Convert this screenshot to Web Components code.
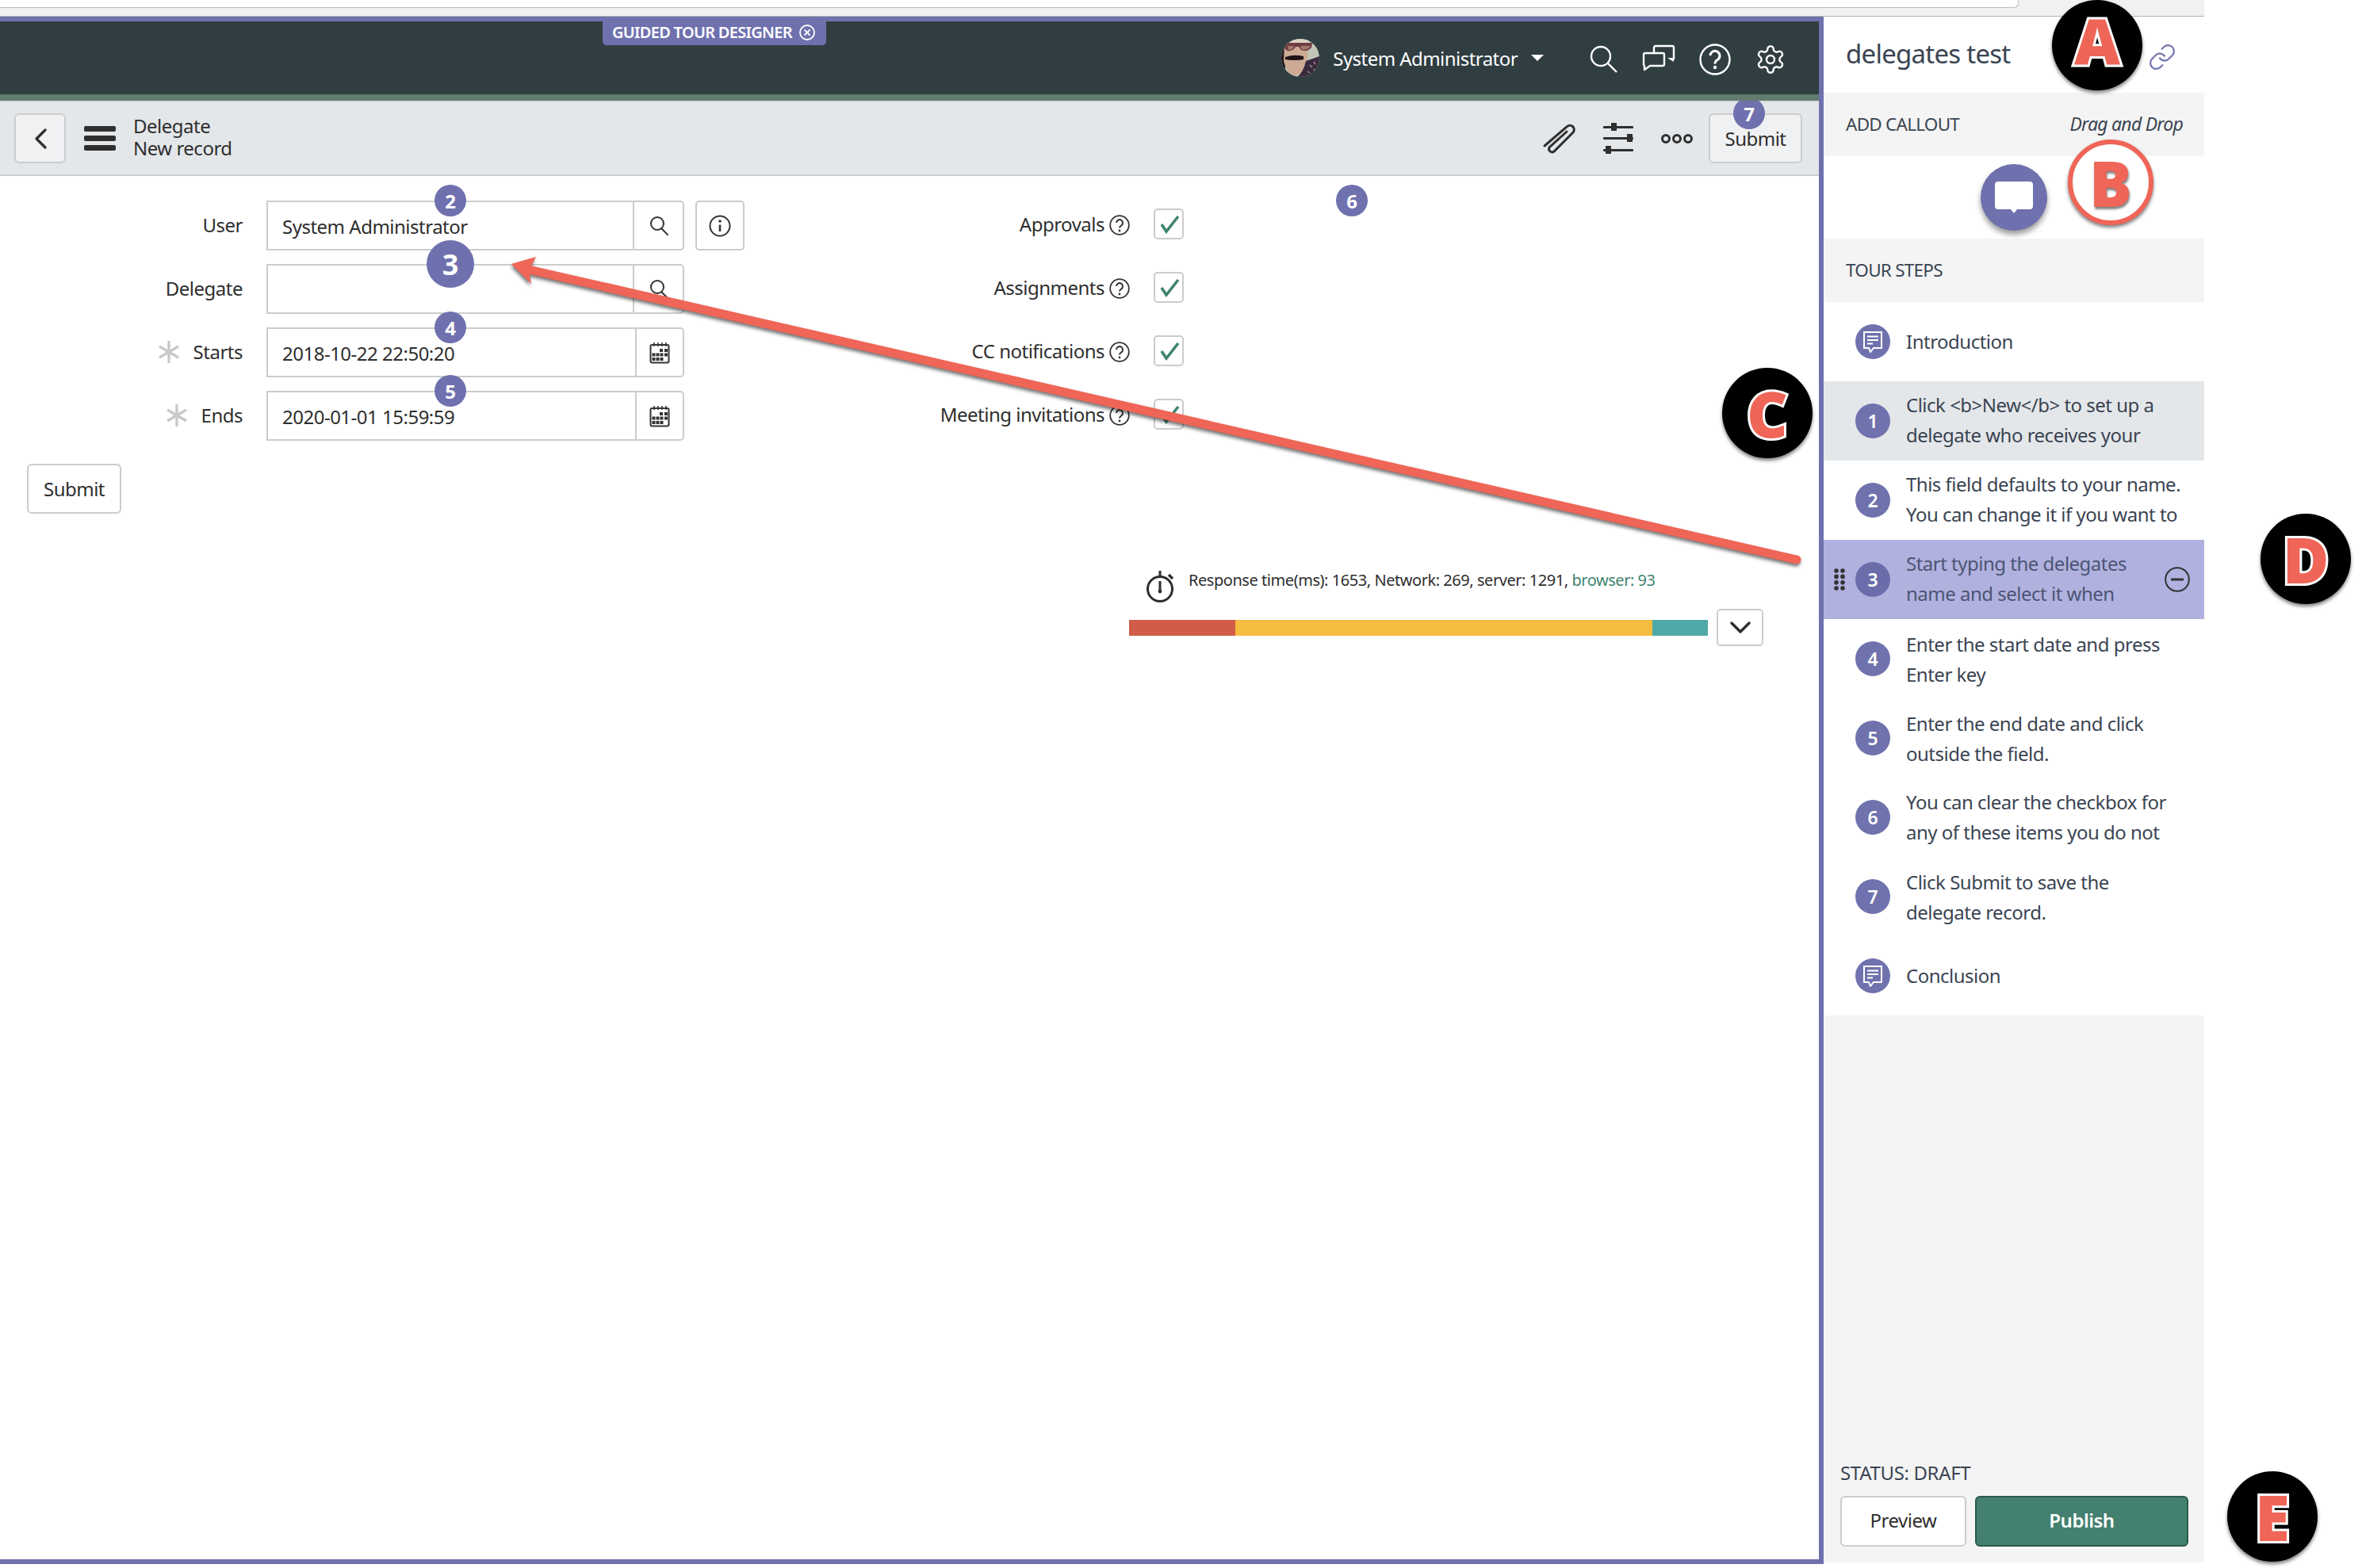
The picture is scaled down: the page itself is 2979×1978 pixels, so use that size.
<!DOCTYPE html>
<html>
<head>
<meta charset="utf-8">
<style>
  html, body { margin: 0; padding: 0; background: #fff; }
  body {
    font-family: "Noto Sans", "Open Sans", sans-serif;
    font-size: 24px;
    letter-spacing: -0.5px;
    color: #2e2e2e;
  }
</style>
</head>
<body>
<tour-page>
  <browser-strip></browser-strip>
  <div style="display:flex;align-items:flex-start">
    <app-frame>
      <top-nav user="System Administrator"></top-nav>
      <form-header title-top="Delegate" title-bottom="New record">
        <step-badge slot="over" num="7" x="2206" y="14"></step-badge>
      </form-header>
      <record-form>
        <div slot="left">
          <form-field label="User" value="System Administrator" icon="search" info></form-field>
          <form-field label="Delegate" icon="search"></form-field>
          <form-field label="Starts" value="2018-10-22 22:50:20" icon="calendar" required></form-field>
          <form-field label="Ends" value="2020-01-01 15:59:59" icon="calendar" required></form-field>
        </div>
        <div slot="right">
          <check-field label="Approvals"></check-field>
          <check-field label="Assignments"></check-field>
          <check-field label="CC notifications"></check-field>
          <check-field label="Meeting invitations"></check-field>
        </div>
      </record-form>
      <perf-bar></perf-bar>
    </app-frame>
    <tour-panel name="delegates test">
      <tour-step kind="note">Introduction</tour-step>
      <tour-step num="1" state="hover" nudge="-2">Click &lt;b&gt;New&lt;/b&gt; to set up a<br>delegate who receives your</tour-step>
      <tour-step num="2" nudge="-2">This field defaults to your name.<br>You can change it if you want to</tour-step>
      <tour-step num="3" state="active" nudge="-2">Start typing the delegates<br>name and select it when</tour-step>
      <tour-step num="4" nudge="2">Enter the start date and press<br>Enter key</tour-step>
      <tour-step num="5" nudge="2">Enter the end date and click<br>outside the field.</tour-step>
      <tour-step num="6" nudge="-1">You can clear the checkbox for<br>any of these items you do not</tour-step>
      <tour-step num="7" nudge="2">Click Submit to save the<br>delegate record.</tour-step>
      <tour-step kind="note">Conclusion</tour-step>
    </tour-panel>
  </div>

  <step-badge num="2" x="568" y="253"></step-badge>
  <step-badge num="3" x="568" y="333" size="60"></step-badge>
  <step-badge num="4" x="568" y="413"></step-badge>
  <step-badge num="5" x="568" y="493"></step-badge>
  <step-badge num="6" x="1705" y="253"></step-badge>

  <callout-arrow></callout-arrow>

  <letter-callout letter="A" x="2645" y="57" ly="-6"></letter-callout>
  <letter-callout letter="B" x="2662" y="230" variant="ring"></letter-callout>
  <letter-callout letter="C" x="2229" y="521"></letter-callout>
  <letter-callout letter="D" x="2908" y="705"></letter-callout>
  <letter-callout letter="E" x="2866" y="1913"></letter-callout>
</tour-page>

<script>
const ICONS = {
  search: '<svg width="26" height="26" viewBox="0 0 26 26" fill="none" stroke="#333" stroke-width="2"><circle cx="11" cy="10" r="8"/><path d="M16.5 16.5 L24 24" stroke-linecap="round"/></svg>',
  calendar: '<svg width="26" height="28" viewBox="0 0 26 28" fill="none" stroke="#333" stroke-width="2"><rect x="1.5" y="4" width="23" height="22.5" rx="2"/><path d="M6 1v5M11 1v5M16 1v5M21 1v5" stroke-width="1.5"/><g fill="#333" stroke="none"><rect x="13" y="9" width="4" height="4"/><rect x="19" y="9" width="4" height="4"/><rect x="3.5" y="14.5" width="4" height="4"/><rect x="8.5" y="14.5" width="4" height="4"/><rect x="13.5" y="14.5" width="4" height="4"/><rect x="19" y="14.5" width="4" height="4"/><rect x="3.5" y="20" width="4" height="4"/><rect x="8.5" y="20" width="4" height="4"/><rect x="13.5" y="20" width="4" height="4"/></g></svg>',
  note: '<svg width="26" height="28" viewBox="0 0 26 28" fill="none" stroke="#fff" stroke-width="2"><path d="M2 2 H24 V22 H14 L10 27 L8 22 H2 Z"/><path d="M6 7.5 H20 M6 12 H20 M6 16.5 H13"/></svg>'
};

class TourPage extends HTMLElement {
  constructor() {
    super();
    this.attachShadow({ mode: 'open' });
    this.shadowRoot.innerHTML = `
      <style>
        :host { display: block; position: relative; width: 2979px; height: 1978px; overflow: hidden; background: #fff; }
      </style>
      <slot></slot>`;
  }
}

class BrowserStrip extends HTMLElement {
  constructor() {
    super();
    this.attachShadow({ mode: 'open' });
    this.shadowRoot.innerHTML = `
      <style>
        :host { display: block; width: 2780px; height: 21px; box-sizing: border-box; background: #f1f1f1; border-bottom: 1px solid #b4b4b4; }
        .url { width: 2546px; height: 10px; box-sizing: border-box; background: #fff; border-bottom: 1px solid #bcbcbc; border-right: 1px solid #bcbcbc; border-bottom-right-radius: 6px; }
      </style>
      <div class="url"></div>`;
  }
}

class AppFrame extends HTMLElement {
  constructor() {
    super();
    this.attachShadow({ mode: 'open' });
    this.shadowRoot.innerHTML = `
      <style>
        :host { display: block; box-sizing: border-box; width: 2300px; height: 1952px; flex: none; background: #fff;
          border-top: 6px solid #6f71ae; border-right: 6px solid #6f71ae; border-bottom: 6px solid #6f71ae; }
      </style>
      <slot></slot>`;
  }
}

class TopNav extends HTMLElement {
  constructor() {
    super();
    this.attachShadow({ mode: 'open' });
    const user = this.getAttribute('user');
    this.shadowRoot.innerHTML = `
      <style>
        /* z-index keeps the nav over the top of pin 7 */
        :host { display: flex; align-items: center; position: relative; z-index: 3; box-sizing: content-box; height: 92px; background: #303e42; border-bottom: 8px solid #627c6f; color: #fff; padding-right: 41px; justify-content: flex-end; }
        .tab { position: absolute; left: 760px; top: 0; width: 282px; height: 30px; box-sizing: border-box; padding: 0 0 3px 12px; background: #6f71ae; border-radius: 0 0 5px 5px; display: flex; align-items: center; gap: 8px; font-size: 20px; font-weight: 600; letter-spacing: -0.7px; color: #fff; white-space: nowrap; }
        svg { display: block; flex: none; }
        .ico { margin-top: 4px; }
        .name { margin-left: 17px; font-size: 24px; letter-spacing: -0.55px; white-space: nowrap; }
        .caret { margin-left: 17px; width: 0; height: 0; border: 8px solid transparent; border-top: 8px solid #fff; border-bottom: 0; }
      </style>
      <div class="tab">GUIDED TOUR DESIGNER
        <svg width="22" height="22" viewBox="0 0 22 22" fill="none" stroke="#fff" stroke-width="1.8"><circle cx="11" cy="11" r="9"/><path d="M7.5 7.5l7 7M14.5 7.5l-7 7"/></svg>
      </div>
      <svg width="48" height="48" viewBox="0 0 48 48">
        <defs><clipPath id="c"><circle cx="24" cy="24" r="24"/></clipPath></defs>
        <g clip-path="url(#c)">
          <rect width="48" height="48" fill="#c2c6b6"/>
          <rect x="0" width="5" height="48" fill="#24161c"/>
          <path d="M4 0 H34 L36 6 H5 Z" fill="#ddd2c2"/>
          <path d="M4 5 H34 L33 32 Q26 46 15 46 Q6 42 3 28 Z" fill="#cdaa94"/>
          <path d="M3 5 H39 L38 11 Q33 17 25 14 L22 10 H18 Q15 16 8 15 Q4 13 3 9 Z" fill="#6e3c42"/>
          <path d="M8 9 H16 Q15 14 9 14 Z M24 9 H37 Q33 15 26 13 Z" fill="#a57a6c"/>
          <path d="M5 23 Q16 19 28 22 L28 26 Q16 28 5 26 Z" fill="#1e1216"/>
          <path d="M31 28 L48 22 V48 H20 Q28 42 31 28 Z" fill="#3a2a3c"/>
          <path d="M36 33l3 3M41 29l2 3M33 41l3 2M41 38l2 3" stroke="#9a8a9a" stroke-width="1.5"/>
        </g>
      </svg>
      <span class="name">${user}</span>
      <span class="caret"></span>
      <svg class="ico" style="margin-left:58px" width="36" height="36" viewBox="0 0 36 36" fill="none" stroke="#fff" stroke-width="2.4"><circle cx="14" cy="14" r="12"/><path d="M22.5 22.5 L34 34"/></svg>
      <svg style="margin-left:30px" width="42" height="36" viewBox="0 0 42 36" fill="none" stroke="#fff" stroke-width="2.4" stroke-linejoin="round"><path d="M2 14 a2 2 0 0 1 2-2 H26 a2 2 0 0 1 2 2 V26 a2 2 0 0 1-2 2 H10 L3 33 V28 a2 2 0 0 1-1-2 Z"/><path d="M15 12 V5 a2 2 0 0 1 2-2 H38 a2 2 0 0 1 2 2 V20"/><path d="M40 23 L32 18 H40 Z" fill="#fff" stroke="none"/></svg>
      <svg class="ico" style="margin-left:30px" width="40" height="40" viewBox="0 0 40 40" fill="none" stroke="#fff" stroke-width="2.4"><circle cx="20" cy="20" r="18.5"/><path d="M14 15 a6 6 0 1 1 9 5.5 c-2 1-3 2-3 5" stroke-width="3"/><circle cx="20" cy="30" r="2.2" fill="#fff" stroke="none"/></svg>
      <svg class="ico" style="margin-left:30px" width="40" height="40" viewBox="0 0 24 24" fill="none" stroke="#fff" stroke-width="1.45"><path d="M12.22 2h-.44a2 2 0 0 0-2 2v.18a2 2 0 0 1-1 1.73l-.43.25a2 2 0 0 1-2 0l-.15-.08a2 2 0 0 0-2.73.73l-.22.38a2 2 0 0 0 .73 2.73l.15.1a2 2 0 0 1 1 1.72v.51a2 2 0 0 1-1 1.74l-.15.09a2 2 0 0 0-.73 2.73l.22.38a2 2 0 0 0 2.73.73l.15-.08a2 2 0 0 1 2 0l.43.25a2 2 0 0 1 1 1.73V20a2 2 0 0 0 2 2h.44a2 2 0 0 0 2-2v-.18a2 2 0 0 1 1-1.73l.43-.25a2 2 0 0 1 2 0l.15.08a2 2 0 0 0 2.73-.73l.22-.39a2 2 0 0 0-.73-2.73l-.15-.08a2 2 0 0 1-1-1.74v-.5a2 2 0 0 1 1-1.74l.15-.09a2 2 0 0 0 .73-2.73l-.22-.38a2 2 0 0 0-2.73-.73l-.15.08a2 2 0 0 1-2 0l-.43-.25a2 2 0 0 1-1-1.73V4a2 2 0 0 0-2-2z"/><circle cx="12" cy="12" r="3"/></svg>`;
  }
}

class FormHeader extends HTMLElement {
  constructor() {
    super();
    this.attachShadow({ mode: 'open' });
    this.shadowRoot.innerHTML = `
      <style>
        :host { display: flex; align-items: center; position: relative; box-sizing: border-box; height: 95px; padding: 0 21px 0 18px; background: #e4e7ea; border-top: 2px solid #d6d9dc; border-bottom: 2px solid #cdcdcd; }
        .btn { box-sizing: border-box; height: 63px; background: #f0f1f3; border: 2px solid #cccccc; border-radius: 6px; display: flex; align-items: center; justify-content: center; flex: none; color: #2e2e2e; }
        .back { width: 65px; }
        .titles { margin-left: 22px; line-height: 28px; margin-top: -4px; color: #2e2e2e; }
        .bars { margin-left: 23px; width: 40px; display: flex; flex-direction: column; gap: 5px; }
        .bars i { display: block; height: 7px; background: #2f2f2f; border-radius: 2px; }
        .tools { margin-left: auto; display: flex; align-items: center; }
        .submit { width: 118px; margin-left: 19px; font-size: 24px; }
        svg { display: block; }
      </style>
      <div class="btn back"><svg width="16" height="26" viewBox="0 0 16 26" fill="none" stroke="#2f2f2f" stroke-width="3.2" stroke-linecap="round" stroke-linejoin="round"><path d="M14 2 L3 13 L14 24"/></svg></div>
      <div class="bars"><i></i><i></i><i></i></div>
      <div class="titles">${this.getAttribute('title-top')}<br>${this.getAttribute('title-bottom')}</div>
      <div class="tools">
        <svg width="44" height="40" viewBox="0 0 44 40" fill="none" stroke="#2f2f2f" stroke-width="3" stroke-linecap="round"><path d="M3 29 L31 5 A5 5 0 0 1 39 12 L15 36 A4 4 0 0 1 9 31 L31 11"/></svg>
        <svg style="margin-left:32px" width="40" height="42" viewBox="0 0 40 42" fill="#2f2f2f" stroke="none"><g><rect x="1" y="5" width="38" height="3" rx="1"/><rect x="11" y="1" width="7" height="10"/><rect x="1" y="19" width="38" height="3" rx="1"/><rect x="31" y="15" width="7" height="10"/><rect x="1" y="34" width="38" height="3" rx="1"/><rect x="4" y="30" width="7" height="10"/></g></svg>
        <svg style="margin-left:33px" width="42" height="14" viewBox="0 0 42 14" fill="none" stroke="#2f2f2f" stroke-width="3"><circle cx="7" cy="7" r="4.5"/><circle cx="21" cy="7" r="4.5"/><circle cx="35" cy="7" r="4.5"/></svg>
        <div class="btn submit">Submit</div>
      </div>
      <slot name="over"></slot>`;
  }
}

class RecordForm extends HTMLElement {
  constructor() {
    super();
    this.attachShadow({ mode: 'open' });
    this.shadowRoot.innerHTML = `
      <style>
        :host { display: block; padding-top: 31px; }
        .cols { display: flex; align-items: flex-start; }
        .left { width: 1100px; flex: none; }
        .right { width: 393px; flex: none; padding-top: 10px; }
        .btn { box-sizing: border-box; margin: 29px 0 0 34px; width: 119px; height: 63px; background: #fff; border: 2px solid #cccccc; border-radius: 6px; display: flex; align-items: center; justify-content: center; color: #2e2e2e; }
        ::slotted([slot=left]) { display: flex; flex-direction: column; gap: 17px; }
        ::slotted([slot=right]) { display: flex; flex-direction: column; gap: 41px; }
      </style>
      <div class="cols">
        <div class="left"><slot name="left"></slot></div>
        <div class="right"><slot name="right"></slot></div>
      </div>
      <div class="btn">Submit</div>`;
  }
}

class FormField extends HTMLElement {
  constructor() {
    super();
    this.attachShadow({ mode: 'open' });
    const icon = this.getAttribute('icon');
    const star = this.hasAttribute('required')
      ? '<svg class="star" width="30" height="30" viewBox="0 0 30 30" stroke="#c9c9c9" stroke-width="3.4" fill="none"><path d="M15 1 V29 M3 8 L27 22 M3 22 L27 8"/></svg>' : '';
    this.shadowRoot.innerHTML = `
      <style>
        :host { display: grid; grid-template-columns: 306px 527px 62px; column-gap: 0; height: 63px; }
        .label { display: flex; justify-content: flex-end; align-items: center; gap: 16px; padding-right: 0; margin-top: -2px; color: #2e2e2e; }
        .box { margin-left: 30px; width: 527px; box-sizing: border-box; height: 63px; border: 2px solid #cccccc; border-radius: 0 5px 5px 0; display: flex; background: #fff; }
        .val { flex: 1; padding: 2px 0 0 18px; display: flex; align-items: center; color: #2e2e2e; white-space: nowrap; }
        .addon { flex: none; box-sizing: border-box; width: ${icon === 'search' ? 63 : 60}px; border-left: 2px solid #cccccc; display: flex; align-items: center; justify-content: center; }
        .info { margin-left: 44px; width: 62px; box-sizing: border-box; height: 63px; border: 2px solid #cccccc; border-radius: 5px; display: flex; align-items: center; justify-content: center; }
        svg { display: block; }
      </style>
      <div class="label">${star}<span>${this.getAttribute('label')}</span></div>
      <div class="box">
        <div class="val">${this.getAttribute('value') || ''}</div>
        <div class="addon">${ICONS[icon]}</div>
      </div>
      ${this.hasAttribute('info') ? `<div class="info"><svg width="28" height="28" viewBox="0 0 28 28" fill="none" stroke="#333" stroke-width="2"><circle cx="14" cy="14" r="12.5"/><path d="M14 12.5 V21" stroke-width="2.6"/><circle cx="14" cy="8" r="1.8" fill="#333" stroke="none"/></svg></div>` : ''}`;
  }
}

class CheckField extends HTMLElement {
  constructor() {
    super();
    this.attachShadow({ mode: 'open' });
    this.shadowRoot.innerHTML = `
      <style>
        :host { display: flex; align-items: center; justify-content: flex-end; height: 39px; color: #2e2e2e; white-space: nowrap; }
        .help { margin-left: 6px; margin-top: 2px; display: block; flex: none; }
        .check { margin-left: 30px; width: 38px; height: 39px; box-sizing: border-box; border: 2px solid #cccccc; border-radius: 5px; display: flex; align-items: center; justify-content: center; background: #fff; flex: none; }
      </style>
      <span>${this.getAttribute('label')}</span>
      <svg class="help" width="26" height="26" viewBox="0 0 26 26" fill="none" stroke="#333" stroke-width="1.8"><circle cx="13" cy="13" r="11.8"/><path d="M9 10 a4 4 0 1 1 6 3.6 c-1.4.8-2 1.4-2 3" stroke-width="2"/><circle cx="13" cy="20" r="1.4" fill="#333" stroke="none"/></svg>
      <div class="check"><svg width="30" height="24" viewBox="0 0 30 24" fill="none" stroke="#3f8470" stroke-width="3.6"><path d="M6 12 L12 21 L27 2"/></svg></div>`;
  }
}

class PerfBar extends HTMLElement {
  constructor() {
    super();
    this.attachShadow({ mode: 'open' });
    this.shadowRoot.innerHTML = `
      <style>
        :host { display: block; margin: 69px 0 0 1424px; width: 800px; }
        .info { display: flex; align-items: flex-start; padding-left: 21px; height: 54px; box-sizing: border-box; }
        .info svg { margin-top: 2px; }
        .txt { margin-left: 16px; margin-top: 1px; font-size: 20px; letter-spacing: -0.45px; white-space: nowrap; color: #2e2e2e; }
        .txt b { font-weight: 400; color: #3f8470; }
        .row { display: flex; align-items: center; gap: 11px; margin-top: -3px; }
        .bar { width: 730px; height: 20px; display: flex; }
        .bar i { display: block; height: 100%; }
        .more { width: 59px; height: 47px; box-sizing: border-box; border: 2px solid #cccccc; border-radius: 5px; display: flex; align-items: center; justify-content: center; background: #fff; }
        svg { display: block; flex: none; }
      </style>
      <div class="info">
        <svg width="38" height="42" viewBox="0 0 38 42" fill="none" stroke="#2e2e2e" stroke-width="3"><circle cx="18" cy="24" r="15.5"/><path d="M18 1 V8 M18 14 V27" /><circle cx="18" cy="27" r="2.4" fill="#2e2e2e" stroke="none"/><path d="M29 6 L34 11" stroke-width="3.4"/></svg>
        <div class="txt">Response time(ms): 1653, Network: 269, server: 1291, <b>browser: 93</b></div>
      </div>
      <div class="row">
        <div class="bar"><i style="width:134px;background:#d05c49"></i><i style="width:526px;background:#f6bc3f"></i><i style="width:70px;background:#4fa9a9"></i></div>
        <div class="more"><svg width="26" height="16" viewBox="0 0 26 16" fill="none" stroke="#2e2e2e" stroke-width="3.4" stroke-linecap="round" stroke-linejoin="round"><path d="M2 2 L13 13 L24 2"/></svg></div>
      </div>`;
  }
}

class TourPanel extends HTMLElement {
  constructor() {
    super();
    this.attachShadow({ mode: 'open' });
    this.shadowRoot.innerHTML = `
      <style>
        :host { display: flex; flex-direction: column; width: 480px; height: 1950px; flex: none; background: #f4f4f4; color: #3a4452; }
        .title { height: 96px; background: #fff; display: flex; align-items: center; justify-content: space-between; padding: 0 35px 0 28px; box-sizing: border-box; }
        .title h1 { margin: 0; font-size: 33px; font-weight: 400; letter-spacing: -0.75px; margin-top: -4px; }
        .title svg { margin-top: 6px; }
        .sec { height: 80px; background: #f4f4f4; display: flex; align-items: center; justify-content: space-between; padding: 0 27px 2px 28px; box-sizing: border-box; font-size: 22.5px; letter-spacing: -0.75px; }
        .sec em { font-size: 23px; }
        .drag { height: 104px; background: #fff; display: flex; align-items: center; justify-content: center; }
        .bubble { width: 84px; height: 84px; border-radius: 50%; background: #6f71ae; display: flex; align-items: center; justify-content: center; box-shadow: 0 5px 7px rgba(0,0,0,.4); }
        .list { background: #fff; display: flex; flex-direction: column; }
        .foot { margin-top: auto; padding: 0 20px 20px 21px; }
        .status { font-size: 24px; letter-spacing: -0.35px; line-height: 30px; margin-bottom: 14px; }
        .btns { display: flex; gap: 11px; }
        .btns div { box-sizing: border-box; height: 64px; padding-bottom: 3px; border-radius: 6px; display: flex; align-items: center; justify-content: center; }
        .prev { width: 159px; background: #fff; border: 2px solid #cccccc; color: #2e2e2e; }
        .pub { width: 269px; background: #44806f; border: 2px solid #2b5a4d; color: #fff; font-weight: 600; }
      </style>
      <div class="title"><h1>${this.getAttribute('name')}</h1>
        <svg width="36" height="36" viewBox="0 0 24 24" fill="none" stroke="#7375b3" stroke-width="1.5" stroke-linecap="round"><path d="M10 13a5 5 0 0 0 7.54.54l3-3a5 5 0 0 0-7.07-7.07l-1.72 1.71"/><path d="M14 11a5 5 0 0 0-7.54-.54l-3 3a5 5 0 0 0 7.07 7.07l1.71-1.71"/></svg>
      </div>
      <div class="sec"><span>ADD CALLOUT</span><em>Drag and Drop</em></div>
      <div class="drag"><div class="bubble"><svg width="48" height="40" viewBox="0 0 48 40" fill="#fff"><path d="M4 0 H44 a4 4 0 0 1 4 4 V31 a4 4 0 0 1-4 4 H28 L24 40 L20 35 H4 a4 4 0 0 1-4-4 V4 a4 4 0 0 1 4-4 Z"/></svg></div></div>
      <div class="sec"><span>TOUR STEPS</span></div>
      <div class="list"><slot></slot></div>
      <div class="foot">
        <div class="status">STATUS: DRAFT</div>
        <div class="btns"><div class="prev">Preview</div><div class="pub">Publish</div></div>
      </div>`;
  }
}

class TourStep extends HTMLElement {
  constructor() {
    super();
    this.attachShadow({ mode: 'open' });
    const active = this.getAttribute('state') === 'active';
    const hover = this.getAttribute('state') === 'hover';
    const nudge = +(this.getAttribute('nudge') || 0);
    const mark = this.getAttribute('kind') === 'note' ? ICONS.note : this.getAttribute('num');
    this.shadowRoot.innerHTML = `
      <style>
        :host { display: grid; grid-template-columns: 40px 44px 1fr auto; align-items: center; height: 100px; box-sizing: border-box; padding-right: 18px;
          background: ${active ? '#b0b1df' : hover ? '#e4e7ea' : '#fff'}; color: ${active ? '#4c5574' : '#3a4452'}; }
        .grip { justify-self: center; display: block; }
        .num { width: 44px; height: 44px; border-radius: 50%; background: ${active ? '#6b6dab' : '#7072ae'}; color: #fff; font-size: 23px; font-weight: 600; letter-spacing: 0; display: flex; align-items: center; justify-content: center; }
        .txt { margin-left: 20px; line-height: 38px; padding-top: ${Math.max(nudge, 0)}px; margin-top: ${Math.min(nudge, 0)}px; white-space: nowrap; }
      </style>
      ${active ? '<svg class="grip" width="14" height="28" viewBox="0 0 14 28" fill="#333"><circle cx="3" cy="3" r="2.8"/><circle cx="11" cy="3" r="2.8"/><circle cx="3" cy="10.4" r="2.8"/><circle cx="11" cy="10.4" r="2.8"/><circle cx="3" cy="17.8" r="2.8"/><circle cx="11" cy="17.8" r="2.8"/><circle cx="3" cy="25" r="2.8"/><circle cx="11" cy="25" r="2.8"/></svg>' : '<span></span>'}
      <div class="num">${mark}</div>
      <div class="txt"><slot></slot></div>
      ${active ? '<svg width="32" height="32" viewBox="0 0 32 32" fill="none" stroke="#333"  stroke-width="2"><circle cx="16" cy="16" r="14.8"/><path d="M8 16 H24" stroke-width="3"/></svg>' : ''}`;
  }
}

// numbered pins on the form, x/y are the centre of the pin
class StepBadge extends HTMLElement {
  constructor() {
    super();
    this.attachShadow({ mode: 'open' });
    const size = +(this.getAttribute('size') || 40);
    const x = +this.getAttribute('x');
    const y = +this.getAttribute('y');
    this.shadowRoot.innerHTML = `
      <style>
        :host { display: flex; align-items: center; justify-content: center; position: absolute; left: ${x - size / 2}px; top: ${y - size / 2}px; width: ${size}px; height: ${size}px; border-radius: 50%; background: #6f71ae; color: #fff; font-weight: 700; letter-spacing: 0; font-size: ${size > 40 ? 36 : 24}px; }
      </style>
      ${this.getAttribute('num')}`;
  }
}

class LetterCallout extends HTMLElement {
  constructor() {
    super();
    this.attachShadow({ mode: 'open' });
    const x = +this.getAttribute('x');
    const y = +this.getAttribute('y');
    const ring = this.getAttribute('variant') === 'ring';
    const size = ring ? 108 : 114;
    const ly = +(this.getAttribute('ly') || 0);
    this.shadowRoot.innerHTML = `
      <style>
        :host { display: flex; align-items: center; justify-content: center; position: absolute; box-sizing: border-box; left: ${x - size / 2}px; top: ${y - size / 2}px; width: ${size}px; height: ${size}px; border-radius: 50%;
          background: ${ring ? '#fff' : '#000'}; ${ring ? 'border: 6px solid #ef6557;' : ''} box-shadow: 0 3px 4px rgba(0,0,0,.5); }
        span { font-family: "Open Sans", sans-serif; font-weight: 800; font-size: 80px; line-height: 1; letter-spacing: 0; color: #ef6557; -webkit-text-stroke: 6px #fff; paint-order: stroke fill; transform: translateY(${ly}px); ${ring ? 'text-shadow: 1px 3px 3px rgba(0,0,0,.5);' : ''} }
      </style>
      <span>${this.getAttribute('letter')}</span>`;
  }
}

class CalloutArrow extends HTMLElement {
  constructor() {
    super();
    this.attachShadow({ mode: 'open' });
    this.shadowRoot.innerHTML = `
      <style>
        :host { display: block; position: absolute; left: 0; top: 0; width: 2979px; height: 1978px; pointer-events: none; }
        svg { display: block; filter: drop-shadow(-1px 3px 2px rgba(0,0,0,.55)); }
      </style>
      <svg width="2979" height="1978" viewBox="0 0 2979 1978">
        <path d="M2266 706 L662 339" stroke="#ef6557" stroke-width="11" stroke-linecap="round" fill="none"/>
        <path d="M645 333 L676 324 L667 341 L670 358 Z" fill="#ef6557"/>
      </svg>`;
  }
}

customElements.define('tour-page', TourPage);
customElements.define('browser-strip', BrowserStrip);
customElements.define('app-frame', AppFrame);
customElements.define('top-nav', TopNav);
customElements.define('form-header', FormHeader);
customElements.define('record-form', RecordForm);
customElements.define('form-field', FormField);
customElements.define('check-field', CheckField);
customElements.define('perf-bar', PerfBar);
customElements.define('tour-panel', TourPanel);
customElements.define('tour-step', TourStep);
customElements.define('step-badge', StepBadge);
customElements.define('letter-callout', LetterCallout);
customElements.define('callout-arrow', CalloutArrow);
</script>
</body>
</html>
